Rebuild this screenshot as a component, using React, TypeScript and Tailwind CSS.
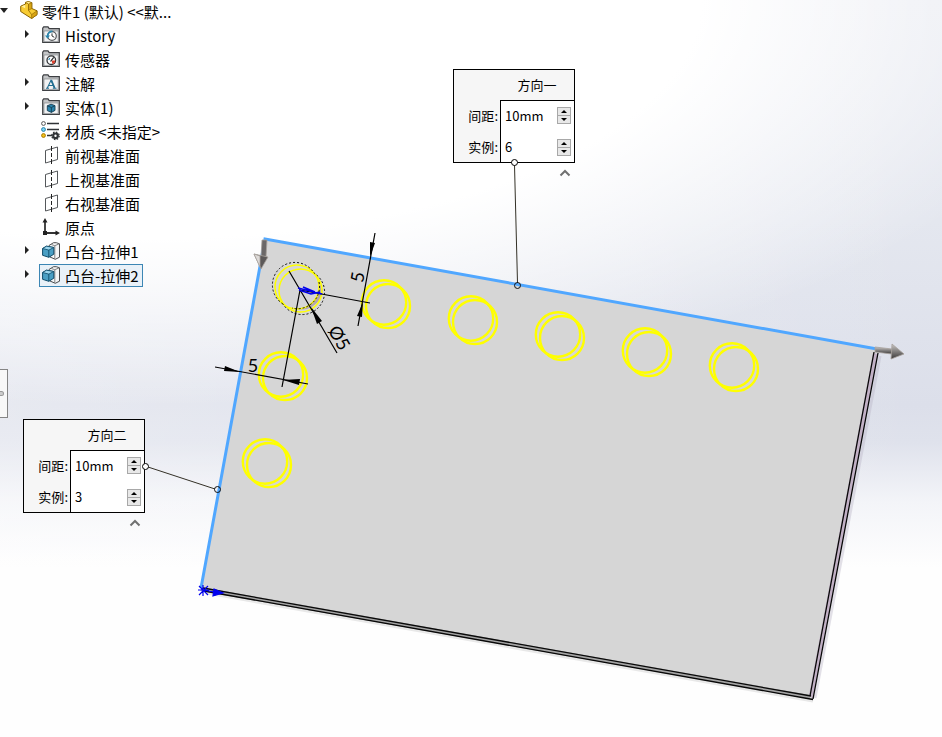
import { useState } from "react";
import type { ReactNode } from "react";

function Folder({ children }: { children?: ReactNode }) {
  return (
    <svg width="18" height="18" viewBox="0 0 18 18" aria-hidden="true">
      <path d="M.7 16.5V2.2L1.7.8H6l1.2 1.8h10.1v13.9z" fill="#c4c6c8" stroke="#3d3f42" strokeWidth="1.2" />
      <path d="M2 5h14.2v10.6H2z" fill="#f1f2f3" stroke="#77797c" strokeWidth=".6" />
      {children}
    </svg>
  );
}

function PartIcon() {
  return (
    <svg width="18" height="18" viewBox="0 0 18 18" aria-hidden="true">
      <path d="M.7 5.200L5.500 3V1.300L8.500.5l3.300 1.200v5.800L17 9.800v3.900l-5.400 3.800L.7 10.500z" fill="#f8cc33" stroke="#8a6300" strokeWidth="1" strokeLinejoin="round" />
      <path d="M11.600 13.600L17 9.800v3.900l-5.400 3.800zM8.500 3l3.300-1.300v5.800l-3.300 1.800z" fill="#d9a514" stroke="#8a6300" strokeWidth=".6" />
      <path d="M5.500 1.500L8.500 3v6.300l3.100 4.300" fill="none" stroke="#9c7206" strokeWidth=".9" />
      <path d="M6.200 1.600L8.500 1l2.200.8-2.200.8zM1.500 5.500l3.700-1.700v3.400z" fill="#fff0a0" />
    </svg>
  );
}

function HistoryIcon() {
  return (
    <Folder>
      <circle cx="10" cy="10" r="4.300" fill="#fff" stroke="#55585b" strokeWidth="1.200" />
      <path d="M10 7.400V10l2.300 1.300" fill="none" stroke="#333" strokeWidth="1" />
      <path d="M10.500 5.400A4.500 4.500 0 0 0 5.600 10" fill="none" stroke="#2b86ad" strokeWidth="1.700" />
      <path d="M3 9.500h5l-2.500 3.300z" fill="#2b86ad" />
    </Folder>
  );
}

function SensorIcon() {
  return (
    <Folder>
      <circle cx="9.300" cy="10.200" r="4.300" fill="#fff" stroke="#2f3235" strokeWidth="1.300" />
      <path d="M9.500 10.500h4a4 4 0 0 1-3 3.500z" fill="#e0402c" />
      <path d="M8.500 11.500l3.200-4.200" stroke="#222" strokeWidth="1.200" />
      <path d="M6.700 10l1-2" stroke="#2b86ad" strokeWidth="1.200" />
    </Folder>
  );
}

function NoteIcon() {
  return (
    <Folder>
      <path d="M5.300 14L9 6.200 12.600 14M6.500 11.500H12M4 14.300h3M10.800 14.300h3.700" fill="none" stroke="#246f92" strokeWidth="1.100" />
      <path d="M9.300 6.200L12.600 14" stroke="#246f92" strokeWidth="1.700" />
    </Folder>
  );
}

function BodyIcon() {
  return (
    <Folder>
      <path d="M5.300 7.800L9 6.200l4 1.400v4.800l-3.600 2-4.100-1.800z" fill="#2983ab" stroke="#173e54" strokeWidth=".9" />
      <path d="M5.300 7.800l4.100 1.700L13 7.600M9.400 9.500v4.900" fill="none" stroke="#173e54" strokeWidth=".9" />
    </Folder>
  );
}

function MaterialIcon() {
  return (
    <svg width="20" height="20" viewBox="0 0 20 20" aria-hidden="true" className="-ml-px">
      <circle cx="2.500" cy="2.500" r="1.900" fill="#fff" stroke="#555" />
      <circle cx="2.500" cy="8.500" r="1.900" fill="#7ed4f5" stroke="#2381ab" />
      <circle cx="2.500" cy="14.500" r="1.900" fill="#f4c21d" stroke="#a87a00" />
      <path d="M6 2.500h12M6 8.500h12M6 14.500h5" stroke="#2f3235" strokeWidth="1.400" />
      <circle cx="14.500" cy="14.800" r="2.300" fill="none" stroke="#2f3235" strokeWidth="2.200" />
      <circle cx="14.500" cy="14.800" r="3.700" fill="none" stroke="#2f3235" strokeWidth="1.300" strokeDasharray="1.500 1.400" />
    </svg>
  );
}

function PlaneIcon() {
  return (
    <svg width="18" height="18" viewBox="0 0 18 18" aria-hidden="true">
      <path d="M3.500 4.500L15.500 1v12.500L3.500 17z" fill="#fff" stroke="#55585b" strokeWidth="1" />
      <path d="M9.500 0v5M9.500 7v4M9.500 13v5" stroke="#222" strokeWidth="1" />
    </svg>
  );
}

function OriginIcon() {
  return (
    <svg width="18" height="18" viewBox="0 0 18 18" aria-hidden="true">
      <path d="M3 2v13h12" fill="none" stroke="#333" strokeWidth="1.800" />
      <path d="M.5 4.500L3 0l2.500 4.500zM13.500 12.500L18 15l-4.500 2.500zM1 13h4v4H1z" fill="#222" />
    </svg>
  );
}

function ExtrudeIcon() {
  return (
    <svg width="18" height="18" viewBox="0 0 18 18" aria-hidden="true">
      <path d="M7 3.500L11.500.7h2.800l3.200 1.100v13.400L13.300 17.300 8 15z" fill="#f6f6f6" stroke="#4a4c4e" strokeWidth="1" />
      <path d="M12.800 17V3.700l4.500-1.900M12.800 3.700L9.300 2.500" fill="none" stroke="#77797b" strokeWidth=".9" />
      <path d="M.6 6.500L4.500 4.200l7.300 1.300v6.700l-5 3.100-6.200-2z" fill="#4a9fc4" stroke="#0f4b69" strokeWidth="1" />
      <path d="M.6 6.500l6.200 1.600 5-2.600-7.300-1.300z" fill="#9bd6ee" stroke="#0f4b69" strokeWidth=".8" />
      <path d="M6.800 8.100v7.200" stroke="#0f4b69" strokeWidth=".9" />
    </svg>
  );
}

type Node = { label: string; icon: ReactNode; expandable?: boolean };

const nodes: Node[] = [
  { label: "History", icon: <HistoryIcon />, expandable: true },
  { label: "传感器", icon: <SensorIcon /> },
  { label: "注解", icon: <NoteIcon />, expandable: true },
  { label: "实体(1)", icon: <BodyIcon />, expandable: true },
  { label: "材质 <未指定>", icon: <MaterialIcon /> },
  { label: "前视基准面", icon: <PlaneIcon /> },
  { label: "上视基准面", icon: <PlaneIcon /> },
  { label: "右视基准面", icon: <PlaneIcon /> },
  { label: "原点", icon: <OriginIcon /> },
  { label: "凸台-拉伸1", icon: <ExtrudeIcon />, expandable: true },
  { label: "凸台-拉伸2", icon: <ExtrudeIcon />, expandable: true },
];

function FeatureTree() {
  const [selected, setSelected] = useState("凸台-拉伸2");
  return (
    <nav aria-label="FeatureManager" className="relative w-fit text-[15px] leading-6 whitespace-nowrap">
      <div className="flex h-6 items-center">
        <button aria-label="折叠" className="flex h-6 w-5 items-center pb-1">
          <svg width="8" height="5" viewBox="0 0 8 5"><path d="M0 0h8L4 5z" fill="#222" /></svg>
        </button>
        <button className="flex items-center gap-1">
          <span className="pb-1"><PartIcon /></span>
          <span>零件1 (默认) &lt;&lt;默...</span>
        </button>
      </div>
      <ul>
        {nodes.map((n) => (
          <li key={n.label} className="flex h-6 items-start pl-6">
            <span className="flex h-5 w-[15px] items-center">
              {n.expandable && (
                <button aria-label={"展开 " + n.label} className="block">
                  <svg width="6" height="8" viewBox="0 0 6 8" className="block"><path d="M1 0l4 4-4 4z" fill="#222" /></svg>
                </button>
              )}
            </span>
            <button
              onClick={() => setSelected(n.label)}
              className={
                n.label === selected
                  ? "flex h-[23px] items-center border border-[#3c86b4] bg-[#e9f1f8] pr-[3px] pl-[2px]"
                  : "flex h-[23px] items-center border border-transparent pr-[3px] pl-[2px]"
              }
            >
              <span className="flex w-[23px] pb-[2px]">{n.icon}</span>
              <span>{n.label}</span>
            </button>
          </li>
        ))}
      </ul>
    </nav>
  );
}

function Spinner({ id, label, initial, unit }: { id: string; label: string; initial: number; unit: string }) {
  const [text, setText] = useState(initial + unit);
  const step = (d: number) => setText(Math.max(1, (parseFloat(text) || 0) + d) + unit);
  return (
    <div className="group flex h-[31px] items-center last:h-[30px]">
      <label htmlFor={id} className="w-[46px] pr-[2px] pb-[2px] text-right group-last:pb-0">{label}:</label>
      <div className="flex h-full flex-1 items-center border-l border-black bg-white pr-[3px] pb-[2px] pl-1 group-last:pb-0">
        <input id={id} value={text} onChange={(e) => setText(e.target.value)} className="w-0 flex-1 bg-transparent outline-none" />
        <span className="flex h-[17px] w-[14px] flex-col border border-[#a8a8a8] bg-[#e8e8e8]">
          <button aria-label={label + " 增加"} onClick={() => step(1)} className="flex flex-1 items-center justify-center border-b border-[#a8a8a8]">
            <svg width="6" height="3" viewBox="0 0 6 3"><path d="M0 3l3-3 3 3z" /></svg>
          </button>
          <button aria-label={label + " 减少"} onClick={() => step(-1)} className="flex flex-1 items-center justify-center">
            <svg width="6" height="3" viewBox="0 0 6 3"><path d="M0 0h6L3 3z" /></svg>
          </button>
        </span>
      </div>
    </div>
  );
}

function Callout({ id, title, count, place }: { id: string; title: string; count: number; place: string }) {
  return (
    <section aria-label={title} className={"absolute flex w-[122px] flex-col text-[13px] leading-5 " + place}>
      <div className="border border-black bg-[#f6f6f6]">
        <h2 className="flex h-[30px] items-center justify-center pl-[46px]">{title}</h2>
        <div>
          <div className="ml-[46px] h-px bg-black" />
          <Spinner id={id + "-spacing"} label="间距" initial={10} unit="mm" />
          <Spinner id={id + "-count"} label="实例" initial={count} unit="" />
        </div>
      </div>
      <button aria-label="收起" className="mt-[6px] mr-1 self-end">
        <svg width="12" height="8" viewBox="0 0 12 8" className="block"><path d="M1.500 6.500L6 2l4.500 4.500" fill="none" stroke="#707070" strokeWidth="2" /></svg>
      </button>
    </section>
  );
}

const holes = [
  [386, 304], [473, 320], [560, 336], [647, 352], [734, 367], [283, 376], [267, 463],
];

function Model() {
  return (
    <svg className="absolute inset-0 h-full w-full overflow-visible" role="img" aria-label="零件1">
      <defs>
        <linearGradient id="shaft" x1="0" x2="0" y1="0" y2="1">
          <stop offset="0" stopColor="#c9c6c4" />
          <stop offset="1" stopColor="#3a3838" />
        </linearGradient>
      </defs>
      <path d="M880 356L815 698" fill="none" stroke="#b9b5c6" strokeWidth="3" opacity=".4" />
      <path d="M207 593L813 701" fill="none" stroke="#c9c9c9" strokeWidth="3" opacity=".4" />
      <path d="M265 239L877 349 812 699 201 590z" fill="#d6d6d6" />
      <path d="M873 353l5 1-65 345-4-4z" fill="#c2b1c6" />
      <path d="M201 589l609 108" stroke="#a4a4a4" strokeWidth="4" />
      <g fill="none" stroke="#080808" strokeWidth="1.300">
        <path d="M874 352L810 696M878 353L813 699" />
        <path d="M203 588L811 696M204 591L813 699.500" />
      </g>
      <path d="M877 349L265 239 201 588" fill="none" stroke="#50a7ff" strokeWidth="3" />

      <g fill="none" stroke="#ffff00" strokeWidth="2.400">
        {holes.map(([x, y]) => (
          <g key={x}>
            <circle cx={x - 2} cy={y - 1.500} r="22.200" />
            <circle cx={x + 2} cy={y + 2} r="22" />
          </g>
        ))}
      </g>

      <path d="M319 282a22 22 0 0 1-26 26 22 22 0 0 0 30-18z" fill="#b3a6b0" />
      <g fill="none">
        <circle cx="297" cy="287" r="22" stroke="#ffff00" strokeWidth="1.500" />
        <circle cx="300.500" cy="290.500" r="21.500" stroke="#ffff00" strokeWidth="1.500" />
        <path d="M283 304A22.500 22.500 0 1 1 314 273A22.500 22.500 0 1 1 283 304" stroke="#111" strokeWidth="1" strokeDasharray="2 2" />
        <path d="M319 282a22 22 0 0 1-27 26" stroke="#111" strokeWidth="1" strokeDasharray="2 2" />
      </g>

      <g stroke="#000" strokeWidth="1.200" fill="none">
        <path d="M289 271L337 353M300 290L370 303M300 290L282 387" />
        <path d="M375 233L358 326M215 367L308 384" />
      </g>
      <g fill="#000">
        <path d="M370 257l0-15 5 1zM363 302l-1 15-5-1z" />
        <path d="M311 307l11 14-5 3z" />
        <path d="M240 372l-16-1 1-5zM283 380l17-1-1 6z" />
      </g>
      <path d="M298 288l24 6M299 290l12 4 9-2M303 287l12 5" stroke="#0000ee" strokeWidth="1.600" fill="none" />
      <g fontSize="18" fill="#000" textAnchor="middle" className="[font-family:Lato,sans-serif]">
        <text x="253" y="372">5</text>
        <text x="0" y="6" transform="translate(358 277) rotate(-80)">5</text>
        <text x="0" y="6" transform="translate(339 338) rotate(60)">Ø5</text>
      </g>

      <g stroke="#a7a19c" strokeWidth=".8">
        <path d="M262 240h5l-1 17h-5z" fill="#6b6868" />
        <path d="M254 254l14 3-7 12z" fill="#5c5959" />
        <path d="M254 254l6 2v11z" fill="#dddad8" />
        <path d="M875 347l17 2v5l-17-2z" fill="url(#shaft)" />
        <path d="M892 344l12 10-13 5z" fill="url(#shaft)" />
      </g>

      <g stroke="#0000ee" strokeWidth="1.200">
        <path d="M198 590h11M203 585v11M199 586l9 9M208 586l-9 9M203 590l11 2" />
        <path d="M214 589l9 4-10 3z" fill="#0000ee" />
      </g>

      <g stroke="#333026" strokeWidth="1" fill="none">
        <path d="M514.500 165L517.500 283M148 467L215 489" />
        <g stroke="#111">
          <circle cx="517.500" cy="285.500" r="3" />
          <circle cx="217.500" cy="489.500" r="3" />
        </g>
      </g>
    </svg>
  );
}

export default function App() {
  return (
    <main className="relative min-h-screen overflow-hidden bg-white bg-[radial-gradient(ellipse_110%_60%_at_15%_0%,#ffffff_54%,#ffffff00_92%),linear-gradient(90deg,#ffffff50,#ffffff00),linear-gradient(180deg,#e9ebf2_0%,#e4e7ef_30%,#dcdfea_55%,#dfe2ec_60%,#f3f4f8_68%,#fefefe_77%,#fefefe_100%)] text-black [font-family:'Noto_Sans_CJK_SC',sans-serif]">
      <Model />
      <FeatureTree />
      <button aria-label="展开面板" className="absolute top-[369px] left-0 flex h-[49px] w-2 items-center border border-l-0 border-[#858585] bg-[#f8f8f8]">
        <span className="h-[5px] w-1 rounded-r-full border border-l-0 border-[#999] bg-[#ccc]" />
      </button>
      <Callout id="dir1" title="方向一" count={6} place="top-[69px] left-[453px]" />
      <Callout id="dir2" title="方向二" count={3} place="top-[419px] left-[23px]" />
      <span className="absolute top-[159px] left-[511px] size-[7px] rounded-full border border-black bg-white" />
      <span className="absolute top-[463px] left-[142px] size-[7px] rounded-full border border-black bg-white" />
    </main>
  );
}
